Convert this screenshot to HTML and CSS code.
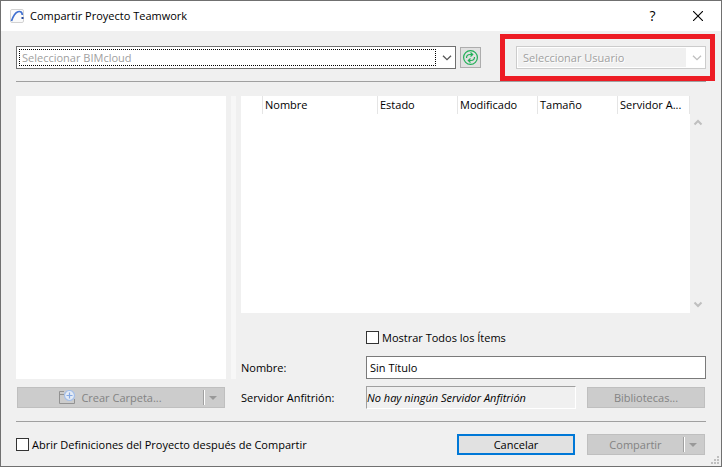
FILE: index.html
```html
<!DOCTYPE html>
<html lang="es">
<head>
<meta charset="utf-8">
<title>Compartir Proyecto Teamwork</title>
<link rel="stylesheet" href="styles.css">
</head>
<body>
<main class="dialog">
  <header class="titlebar">
    <svg class="app-icon" width="14" height="14" viewBox="0 0 14 14" aria-hidden="true">
      <rect x=".5" y=".5" width="13" height="13" rx="1.5" fill="#fafafa" stroke="#d2d2d2"/>
      <path d="M1.500 12C3 7.500 5.500 3.500 8 2.700C10.500 2 12.300 3 12.300 6" fill="none" stroke="#3f6fd0" stroke-width="1.700"/>
      <rect x="11.500" y="8" width="2" height="2" fill="#24489c"/>
    </svg>
    <h1 class="title">Compartir Proyecto Teamwork</h1>
    <button class="caption-button help" type="button" aria-label="Ayuda">?</button>
    <button class="caption-button" type="button" aria-label="Cerrar">
      <svg width="10" height="10" viewBox="0 0 10 10"><path d="M0 0L10 10M10 0L0 10" stroke="#000" stroke-width="1.100"/></svg>
    </button>
  </header>

  <div class="content">
    <div class="toolbar">
      <div class="combo combo-server">
        <select class="combo-field" aria-label="Seleccionar BIMcloud"><option>Seleccionar BIMcloud</option></select>
        <svg class="chevron" width="10" height="6" viewBox="0 0 10 6"><path d="M1 .7L5 4.700L9 .7" fill="none" stroke="#555" stroke-width="1.300"/></svg>
      </div>
      <button class="button refresh" type="button" aria-label="Actualizar">
        <svg width="15" height="15" viewBox="0 0 15 15" fill="none" stroke="#22b058" stroke-width="1.200">
          <circle cx="7.500" cy="7.500" r="6.900"/>
          <path d="M3.500 8C3.500 5.500 5 4.500 7 4.500H9.500M7.500 2.500L9.700 4.500L7.500 6.500M11.500 7C11.500 9.500 10 10.500 8 10.500H5.500M7.500 8.500L5.300 10.500L7.500 12.500"/>
        </svg>
      </button>
      <div class="combo combo-user">
        <select class="combo-field" aria-label="Seleccionar Usuario" disabled><option>Seleccionar Usuario</option></select>
        <svg class="chevron" width="10" height="6" viewBox="0 0 10 6"><path d="M1 .7L5 4.700L9 .7" fill="none" stroke="#bfbfbf" stroke-width="1.300"/></svg>
      </div>
    </div>

    <div class="body">
      <section class="folders">
        <div class="tree"></div>
        <button class="button split" type="button" disabled>
          <span class="split-label">
            <svg width="17" height="15" viewBox="0 0 17 15" fill="none">
              <path d="M5 1.500H.5V13.500H15.500V9M.5 4.500H5" stroke="#929292"/>
              <circle cx="10.500" cy="5.500" r="5" fill="#e4ebf5" stroke="#a5bfe8" stroke-width="1.200"/>
              <path d="M10.500 2.500V8.500M7.500 5.500H13.500" stroke="#85a9e4" stroke-width="1.200"/>
            </svg>
            Crear Carpeta...
          </span>
          <span class="split-arrow"></span>
        </button>
      </section>
      <div class="splitter"></div>
      <section class="projects">
        <div class="list">
          <div class="list-view">
            <table class="list-table">
              <thead>
                <tr><th class="col-icon"></th><th>Nombre</th><th class="col">Estado</th><th class="col">Modificado</th><th class="col">Tamaño</th><th class="col-last">Servidor A...</th></tr>
              </thead>
            </table>
          </div>
          <div class="scrollbar">
            <svg width="10" height="7" viewBox="0 0 10 7"><path d="M1.500 5.500L5 2L8.500 5.500" fill="none" stroke="#bfbfbf" stroke-width="2"/></svg>
            <svg width="10" height="7" viewBox="0 0 10 7"><path d="M1.500 1.500L5 5L8.500 1.500" fill="none" stroke="#bfbfbf" stroke-width="2"/></svg>
          </div>
        </div>
        <div class="form">
          <label class="check check-all"><input type="checkbox">Mostrar Todos los Ítems</label>
          <label for="project-name">Nombre:</label>
          <input class="name-input" id="project-name" type="text" value="Sin Título">
          <span>Servidor Anfitrión:</span>
          <div class="host-row">
            <output class="host">No hay ningún Servidor Anfitrión</output>
            <button class="button" type="button" disabled>Bibliotecas...</button>
          </div>
        </div>
      </section>
    </div>

    <footer class="footer">
      <label class="check"><input type="checkbox">Abrir Definiciones del Proyecto después de Compartir</label>
      <div class="actions">
        <button class="button default" type="button">Cancelar</button>
        <button class="button split" type="button" disabled>
          <span class="split-label">Compartir</span>
          <span class="split-arrow"></span>
        </button>
      </div>
    </footer>
  </div>
  <svg class="grip" width="8" height="8" viewBox="0 0 8 8" fill="#bfbfbf" aria-hidden="true">
    <path d="M6 0h2v2h-2zM3 3h2v2h-2zM6 3h2v2h-2zM0 6h2v2h-2zM3 6h2v2h-2zM6 6h2v2h-2z"/>
  </svg>
</main>
</body>
</html>
```
FILE: styles.css
```css
* {
  box-sizing: border-box;
}

body {
  margin: 0;
  background: #f0f0f0;
  color: #000;
  font: 11px/16px "Open Sans", "Noto Sans", sans-serif;
}

button,
input,
select {
  margin: 0;
  font: inherit;
  color: inherit;
}

.dialog {
  position: relative;
  display: flex;
  flex-direction: column;
  min-height: 100vh;
  border: 1px solid #707070;
  background: #f0f0f0;
}

.titlebar {
  display: flex;
  align-items: center;
  height: 30px;
  padding: 0 1px 0 9px;
  background: #fff;
}

.title {
  flex: 1;
  margin: 0 0 0 6px;
  font-size: 11px;
  font-weight: 400;
}

.caption-button {
  display: flex;
  align-items: center;
  justify-content: center;
  width: 45px;
  height: 30px;
  padding: 0;
  border: 0;
  background: none;
}

.help {
  font-size: 14px;
}

.content {
  display: flex;
  flex: 1;
  flex-direction: column;
  padding: 15px 15px 11px;
}

.toolbar {
  display: flex;
  align-items: center;
  padding-bottom: 12px;
  border-bottom: 1px solid #a0a0a0;
}

.combo {
  position: relative;
  display: flex;
  align-items: center;
  height: 23px;
  border: 1px solid #707070;
  background: #fff;
}

.combo-server {
  flex: 1;
}

.combo-field {
  flex: 1;
  height: 17px;
  margin-left: 2px;
  padding: 0 2px;
  border: 1px dotted #000;
  border-radius: 0;
  outline: 0;
  appearance: none;
  background: #fff;
  color: #a0a0a0;
  line-height: 15px;
}

.chevron {
  margin: 0 3px 0 6px;
}

.combo-user {
  width: 190px;
  margin-left: 35px;
  border-color: #ccc;
}

.combo-user .combo-field {
  height: 19px;
  margin-left: 1px;
  padding: 0 5px;
  border: 0;
  background: #f0f0f0;
  opacity: 1;
  text-shadow: 1px 1px #fff;
}

.combo-user::after {
  content: "";
  position: absolute;
  inset: -13px -10px;
  left: -17px;
  border: 5px solid #ed1c24;
  pointer-events: none;
}

.button {
  display: flex;
  align-items: center;
  justify-content: center;
  width: 118px;
  height: 21px;
  padding: 0;
  border: 1px solid #adadad;
  background: #e1e1e1;
}

.button:disabled {
  border-color: #bfbfbf;
  background: #ccc;
  color: #838383;
}

.refresh {
  width: 21px;
  margin-left: 4px;
}

.default {
  border: 2px solid #0078d7;
}

.split-label {
  display: flex;
  flex: 1;
  align-items: center;
  justify-content: center;
  gap: 5px;
}

.split-arrow {
  display: flex;
  align-items: center;
  justify-content: center;
  width: 21px;
  height: 15px;
  padding-right: 2px;
  border-left: 1px solid #a0a0a0;
  box-shadow: inset 1px 0 #fff;
}

.split-arrow::after {
  content: "";
  border: 4px solid transparent;
  border-top-color: #999;
  border-bottom: 0;
}

.body {
  display: grid;
  flex: 1;
  grid-template-columns: 210px 5px 1fr;
  gap: 5px;
  padding: 14px 0 12px;
}

.folders,
.projects {
  display: flex;
  flex-direction: column;
}

.tree {
  flex: 1;
  margin-bottom: 8px;
  background: #fff;
}

.folders .button {
  width: auto;
  margin: 0 1px 1px;
}

.splitter {
  margin-bottom: 30px;
  background: #f7f7f7;
}

.list {
  display: flex;
  flex: 1;
}

.list-view {
  flex: 1;
  background: #fff;
}

.list-table {
  width: 100%;
  border-collapse: separate;
  border-spacing: 0;
  table-layout: fixed;
}

.list-table th {
  height: 18px;
  padding: 0 2px;
  border-right: 1px solid #e5e5e5;
  font-weight: 400;
  text-align: left;
  white-space: nowrap;
}

.col-icon {
  width: 22px;
}

.col {
  width: 80px;
}

.col-last {
  width: 72px;
}

.scrollbar {
  display: flex;
  flex-direction: column;
  align-items: center;
  justify-content: space-between;
  width: 16px;
  padding: 23px 0 5px;
}

.form {
  display: grid;
  grid-template-columns: 125px 1fr;
  align-items: center;
  row-gap: 7px;
  padding-top: 16px;
}

.check {
  display: flex;
  align-items: center;
  gap: 3px;
}

.check input {
  width: 13px;
  height: 13px;
  border: 1px solid #333;
  appearance: none;
  background: #fff;
}

.check-all {
  grid-column: 2;
  height: 17px;
  margin-bottom: 3px;
}

.name-input {
  width: 100%;
  height: 23px;
  padding: 0 3px;
  border: 1px solid #7a7a7a;
  background: #fff;
}

.host-row {
  display: flex;
  align-items: center;
  gap: 11px;
  padding-right: 1px;
}

.host {
  flex: 1;
  height: 23px;
  border: 1px solid;
  border-color: #a0a0a0 #fff #fff #a0a0a0;
  font-style: italic;
  line-height: 21px;
}

.footer {
  display: flex;
  align-items: center;
  justify-content: space-between;
  padding: 12px 1px 0 0;
  border-top: 1px solid #a0a0a0;
}

.actions {
  display: flex;
  gap: 12px;
}

.grip {
  position: absolute;
  right: 2px;
  bottom: 2px;
}
```
